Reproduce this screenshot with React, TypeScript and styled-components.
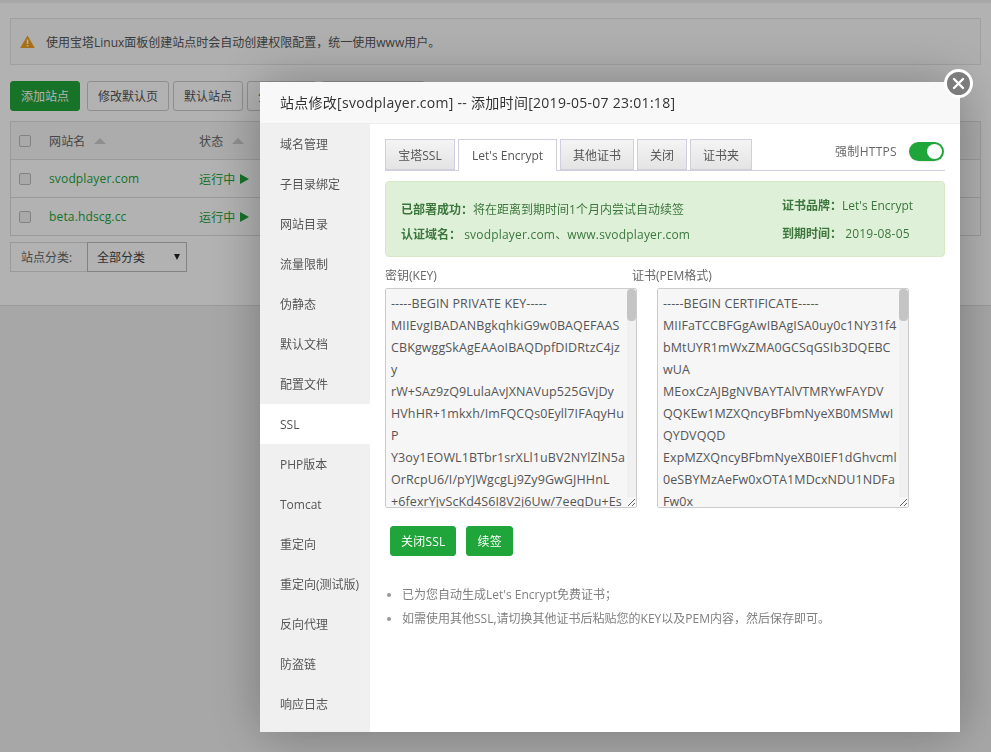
import React from "react";
import styled, { createGlobalStyle } from "styled-components";

const FONT = `"Open Sans", "Noto Sans CJK SC", sans-serif`;

const Global = createGlobalStyle`
  html, body { margin: 0; padding: 0; height: 100%; background: #f0f0f0; overflow: hidden; }
  body { font-family: ${FONT}; font-size: 12px; color: #555; }
  * { box-sizing: border-box; }
`;

const Page = styled.div`
  width: 991px;
  height: 752px;
  padding-top: 3px;
  overflow: hidden;
`;
const Panel = styled.div`
  height: 303px;
  background: #fff;
  border-bottom: 1px solid #ddd;
  padding: 15px 10px 0;
`;
const Notice = styled.div`
  height: 47px;
  display: flex;
  align-items: center;
  gap: 11px;
  padding-left: 9px;
  background: #fbfbfb;
  border: 1px solid #e6e6e6;
  font-size: 12px;
  color: #555;
`;
const Toolbar = styled.div`
  display: flex;
  gap: 4px;
  margin-top: 16px;
`;
const BgButton = styled.div<{ $primary?: boolean; $w: number }>`
  width: ${(p) => p.$w}px;
  height: 30px;
  margin-right: ${(p) => (p.$primary ? "3px" : "0")};
  display: flex;
  align-items: center;
  justify-content: center;
  white-space: nowrap;
  font-size: 12px;
  border-radius: 3px;
  border: 1px solid ${(p) => (p.$primary ? "#20a53a" : "#ccc")};
  background: ${(p) => (p.$primary ? "#20a53a" : "#fff")};
  color: ${(p) => (p.$primary ? "#fff" : "#555")};
`;
const SiteTable = styled.div`
  margin-top: 10px;
  border: 1px solid #ddd;
`;
const SiteRow = styled.div<{ $head?: boolean }>`
  height: ${(p) => (p.$head ? "37px" : "38px")};
  display: grid;
  grid-template-columns: 30px 150px 1fr;
  align-items: center;
  padding-left: 8px;
  background: ${(p) => (p.$head ? "#f6f6f6" : "#fff")};
  border-top: ${(p) => (p.$head ? "none" : "1px solid #ddd")};
`;
const Check = styled.span`
  width: 12px;
  height: 12px;
  border: 1px solid #bbb;
  border-radius: 2px;
  background: #f3f3f3;
`;
const Cell = styled.span<{ $green?: boolean }>`
  display: flex;
  align-items: center;
  gap: 5px;
  font-size: 12px;
  letter-spacing: 0.15px;
  color: ${(p) => (p.$green ? "#20a53a" : "#666")};
`;
const SortUp = styled.i`
  width: 0;
  height: 0;
  margin-left: 4px;
  border-left: 6px solid transparent;
  border-right: 6px solid transparent;
  border-bottom: 6px solid #ccc;
`;
const Play = styled.i`
  width: 0;
  height: 0;
  border-top: 5.5px solid transparent;
  border-bottom: 5.5px solid transparent;
  border-left: 9px solid #20a53a;
`;
const Category = styled.div`
  display: flex;
  margin-top: 6px;
  height: 30px;
`;
const CategoryLabel = styled.div`
  width: 77px;
  display: flex;
  align-items: center;
  padding-left: 10px;
  border: 1px solid #ddd;
  border-right: none;
  font-size: 12px;
  color: #666;
`;
const CategorySelect = styled.div`
  width: 100px;
  display: flex;
  align-items: center;
  justify-content: space-between;
  padding: 0 6px 0 9px;
  border: 1px solid #bbb;
  font-size: 12px;
  color: #444;
`;
const Caret = styled.i`
  width: 0;
  height: 0;
  border-left: 3px solid transparent;
  border-right: 3px solid transparent;
  border-top: 6px solid #222;
`;

const Shade = styled.div`
  position: fixed;
  inset: 0;
  background: rgba(0, 0, 0, 0.3);
`;
const Modal = styled.div`
  position: fixed;
  left: 260px;
  top: 82px;
  width: 700px;
  height: 650px;
  background: #fff;
  box-shadow: 1px 1px 50px rgba(0, 0, 0, 0.3);
`;
const ModalHead = styled.div`
  height: 42px;
  padding: 0 0 2px 20px;
  display: flex;
  align-items: center;
  background: #f8f8f8;
  border-bottom: 1px solid #eee;
  font-size: 14px;
  letter-spacing: 0.28px;
  color: #333;
`;
const Close = styled.button`
  position: absolute;
  right: -13px;
  top: -13px;
  width: 29px;
  height: 29px;
  padding: 0;
  display: flex;
  align-items: center;
  justify-content: center;
  border-radius: 50%;
  border: 3px solid #fff;
  background: #7c7c7c;
`;
const ModalBody = styled.div`
  display: flex;
  height: 608px;
`;
const Side = styled.div`
  width: 110px;
  background: #f0f0f0;
`;
const SideItem = styled.div<{ $active?: boolean }>`
  height: 40px;
  padding-left: 20px;
  display: flex;
  align-items: center;
  font-size: 12px;
  white-space: nowrap;
  color: #555;
  background: ${(p) => (p.$active ? "#fff" : "transparent")};
`;
const Content = styled.div`
  flex: 1;
  padding: 15px 15px 0;
`;
const TabBar = styled.div`
  position: relative;
  display: flex;
  gap: 3px;
  height: 32px;
  border-bottom: 1px solid #cfcfdd;
`;
const Tab = styled.div<{ $active?: boolean; $w: number }>`
  width: ${(p) => p.$w}px;
  height: ${(p) => (p.$active ? "32px" : "31px")};
  display: flex;
  align-items: center;
  justify-content: center;
  font-size: 12px;
  color: #555;
  border: 1px solid #cfcfdd;
  border-bottom: ${(p) => (p.$active ? "none" : "1px solid #cfcfdd")};
  background: ${(p) => (p.$active ? "#fff" : "linear-gradient(#f4f4f4, #e4e4e4)")};
`;
const ForceHttps = styled.div`
  margin: 2px 1px 0 auto;
  height: 20px;
  display: flex;
  align-items: center;
  gap: 12px;
  font-size: 12px;
  letter-spacing: 0.3px;
  color: #666;
`;
const Toggle = styled.span`
  position: relative;
  width: 35px;
  height: 19px;
  border-radius: 10px;
  background: #20a53a;
  box-shadow: 0 1px 1px rgba(0, 0, 0, 0.08);
`;
const Knob = styled.span`
  position: absolute;
  right: 2px;
  top: 2px;
  width: 15px;
  height: 15px;
  border-radius: 50%;
  background: #fff;
`;
const Alert = styled.div`
  margin-top: 10px;
  height: 76px;
  padding: 0 15px;
  display: flex;
  justify-content: space-between;
  background: #dff0d8;
  border: 1px solid #d6e9c6;
  border-radius: 4px;
  font-size: 12px;
  color: #3c763d;
`;
const AlertCol = styled.div<{ $narrow?: boolean }>`
  width: ${(p) => (p.$narrow ? "147px" : "auto")};
  display: flex;
  flex-direction: column;
  gap: ${(p) => (p.$narrow ? "10px" : "7px")};
  padding-top: ${(p) => (p.$narrow ? "15px" : "19px")};
`;
const AlertLine = styled.div`
  line-height: 18px;
  white-space: nowrap;
  b { font-weight: 700; }
`;
const AlertValue = styled.span`
  letter-spacing: 0.2px;
`;
const Fields = styled.div`
  margin-top: 10px;
  display: flex;
`;
const Field = styled.div<{ $wide?: boolean }>`
  width: ${(p) => (p.$wide ? "247px" : "277px")};
  display: flex;
  flex-direction: column;
`;
const FieldLabel = styled.label`
  height: 21px;
  line-height: 18px;
  font-size: 12px;
  color: #666;
`;
const KeyBox = styled.div<{ $indent?: boolean }>`
  position: relative;
  width: 252px;
  height: 220px;
  margin-left: ${(p) => (p.$indent ? "25px" : "0")};
`;
const KeyArea = styled.textarea`
  display: block;
  width: 252px;
  height: 220px;
  margin: 0;
  padding: 4px 5px 3px;
  border: 1px solid #ccc;
  border-radius: 2px;
  outline: none;
  background: #f6f6f6;
  color: #555;
  font-family: ${FONT};
  font-size: 12.5px;
  letter-spacing: 0.1px;
  line-height: 22px;
  white-space: pre;
  overflow-x: hidden;
  overflow-y: scroll;
  resize: both;
`;
const ScrollTrack = styled.div`
  position: absolute;
  top: 1px;
  right: 1px;
  width: 9px;
  height: 208px;
  background: #f0f0f0;
  pointer-events: none;
`;
const ScrollThumb = styled.div`
  width: 9px;
  height: 32px;
  border-radius: 4px;
  background: #c4c4c4;
`;
const Actions = styled.div`
  margin: 18px 0 0 5px;
  display: flex;
  gap: 10px;
`;
const GreenButton = styled.button`
  height: 30px;
  padding: 0 10px;
  border: 1px solid #20a53a;
  border-radius: 3px;
  background: #20a53a;
  color: #fff;
  font-family: ${FONT};
  font-size: 12px;
  letter-spacing: 0.2px;
`;
const Tips = styled.ul`
  margin: 27px 0 0;
  padding: 0 0 0 17px;
  font-size: 12px;
  color: #808080;
  li { line-height: 24px; }
  li::marker { color: #999; font-size: 11px; }
`;

const X = () => (
  <svg width="13" height="13" viewBox="0 0 13 13">
    <path d="M2 2 L11 11 M11 2 L2 11" stroke="#fff" strokeWidth="2.4" strokeLinecap="round" />
  </svg>
);
const Warn = () => (
  <svg width="15" height="13" viewBox="0 0 15 13">
    <path d="M7.5 0.5 L14.8 13 H0.2 Z" fill="#f0a020" />
    <rect x="6.8" y="4.5" width="1.5" height="4.5" fill="#fff" />
    <rect x="6.8" y="10" width="1.5" height="1.5" fill="#fff" />
  </svg>
);

const sideItems = ["域名管理","子目录绑定","网站目录","流量限制","伪静态","默认文档","配置文件","SSL","PHP版本","Tomcat","重定向","重定向(测试版)","反向代理","防盗链","响应日志"];
const tabs: [string, number][] = [["宝塔SSL", 70], ["Let's Encrypt", 99], ["其他证书", 74], ["关闭", 50], ["证书夹", 62]];
const filler = Array.from({ length: 56 }, () => "QUFBQUFBQUFBQUFBQUFBQUFBQUFBQUFBQUFBQUFB").join("\n");
const keyText = `-----BEGIN PRIVATE KEY-----
MIIEvgIBADANBgkqhkiG9w0BAQEFAAS
CBKgwggSkAgEAAoIBAQDpfDIDRtzC4jz
y
rW+SAz9zQ9LulaAvJXNAVup525GVjDy
HVhHR+1mkxh/ImFQCQs0Eyll7IFAqyHu
P
Y3oy1EOWL1BTbr1srXLl1uBV2NYlZlN5a
OrRcpU6/I/pYJWgcgLj9Zy9GwGJHHnL
+6fexrYjvScKd4S6I8V2j6Uw/7eeqDu+Es
${filler}`;
const certText = `-----BEGIN CERTIFICATE-----
MIIFaTCCBFGgAwIBAgISA0uy0c1NY31f4
bMtUYR1mWxZMA0GCSqGSIb3DQEBC
wUA
MEoxCzAJBgNVBAYTAlVTMRYwFAYDV
QQKEw1MZXQncyBFbmNyeXB0MSMwI
QYDVQQD
ExpMZXQncyBFbmNyeXB0IEF1dGhvcml
0eSBYMzAeFw0xOTA1MDcxNDU1NDFa
Fw0x
${filler}`;

export default function App() {
  return (
    <>
      <Global />
      <Page>
        <Panel>
          <Notice>
            <Warn />
            <span>使用宝塔Linux面板创建站点时会自动创建权限配置，统一使用www用户。</span>
          </Notice>
          <Toolbar>
            <BgButton $primary $w={70}>添加站点</BgButton>
            <BgButton $w={82}>修改默认页</BgButton>
            <BgButton $w={70}>默认站点</BgButton>
            <BgButton $w={70}>分类管理</BgButton>
            <BgButton $w={104}>PHP命令行版本</BgButton>
          </Toolbar>
          <SiteTable>
            <SiteRow $head>
              <Check />
              <Cell>网站名<SortUp /></Cell>
              <Cell>状态<SortUp /></Cell>
            </SiteRow>
            <SiteRow>
              <Check />
              <Cell $green>svodplayer.com</Cell>
              <Cell $green>运行中<Play /></Cell>
            </SiteRow>
            <SiteRow>
              <Check />
              <Cell $green>beta.hdscg.cc</Cell>
              <Cell $green>运行中<Play /></Cell>
            </SiteRow>
          </SiteTable>
          <Category>
            <CategoryLabel>站点分类:</CategoryLabel>
            <CategorySelect>全部分类<Caret /></CategorySelect>
          </Category>
        </Panel>
      </Page>
      <Shade />
      <Modal>
        <ModalHead>站点修改[svodplayer.com] -- 添加时间[2019-05-07 23:01:18]</ModalHead>
        <Close aria-label="关闭"><X /></Close>
        <ModalBody>
          <Side>
            {sideItems.map((s) => (
              <SideItem key={s} $active={s === "SSL"}>{s}</SideItem>
            ))}
          </Side>
          <Content>
            <TabBar>
              {tabs.map(([t, w]) => (
                <Tab key={t} $w={w} $active={t === "Let's Encrypt"}>{t}</Tab>
              ))}
              <ForceHttps>强制HTTPS<Toggle><Knob /></Toggle></ForceHttps>
            </TabBar>
            <Alert>
              <AlertCol>
                <AlertLine><b>已部署成功：</b>将在距离到期时间1个月内尝试自动续签</AlertLine>
                <AlertLine><b>认证域名：</b> <AlertValue>svodplayer.com、www.svodplayer.com</AlertValue></AlertLine>
              </AlertCol>
              <AlertCol $narrow>
                <AlertLine><b>证书品牌：</b>Let's Encrypt</AlertLine>
                <AlertLine><b>到期时间：</b> <AlertValue>2019-08-05</AlertValue></AlertLine>
              </AlertCol>
            </Alert>
            <Fields>
              <Field $wide>
                <FieldLabel>密钥(KEY)</FieldLabel>
                <KeyBox>
                  <KeyArea readOnly wrap="off" value={keyText} />
                  <ScrollTrack><ScrollThumb /></ScrollTrack>
                </KeyBox>
              </Field>
              <Field>
                <FieldLabel>证书(PEM格式)</FieldLabel>
                <KeyBox $indent>
                  <KeyArea readOnly wrap="off" value={certText} />
                  <ScrollTrack><ScrollThumb /></ScrollTrack>
                </KeyBox>
              </Field>
            </Fields>
            <Actions>
              <GreenButton>关闭SSL</GreenButton>
              <GreenButton>续签</GreenButton>
            </Actions>
            <Tips>
              <li>已为您自动生成Let's Encrypt免费证书；</li>
              <li>如需使用其他SSL,请切换其他证书后粘贴您的KEY以及PEM内容，然后保存即可。</li>
            </Tips>
          </Content>
        </ModalBody>
      </Modal>
    </>
  );
}
